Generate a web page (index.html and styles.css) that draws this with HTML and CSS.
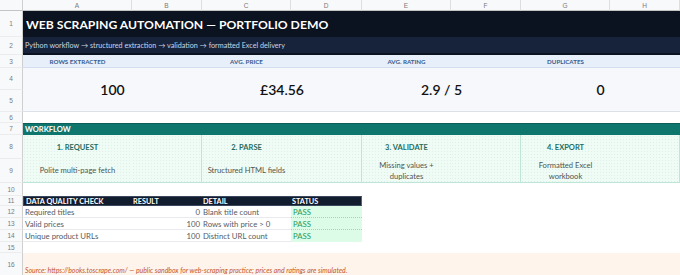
FILE: index.html
```html
<!DOCTYPE html>
<html lang="en">
<head>
<meta charset="utf-8">
<title>Web Scraping Automation — Portfolio Demo</title>
<link rel="stylesheet" href="styles.css">
</head>
<body>
<div class="sheet">
  <div class="cell corner"></div>
  <div class="cell colhead">A</div>
  <div class="cell colhead">B</div>
  <div class="cell colhead">C</div>
  <div class="cell colhead">D</div>
  <div class="cell colhead">E</div>
  <div class="cell colhead">F</div>
  <div class="cell colhead">G</div>
  <div class="cell colhead">H</div>

  <div class="cell rowhead">1</div>
  <div class="cell title span8">WEB SCRAPING AUTOMATION — PORTFOLIO DEMO</div>

  <div class="cell rowhead">2</div>
  <div class="cell subtitle span8">Python workflow → structured extraction → validation → formatted Excel delivery</div>

  <div class="cell rowhead">3</div>
  <div class="cell kpi-label">ROWS EXTRACTED</div>
  <div class="cell kpi-label"></div>
  <div class="cell kpi-label">AVG. PRICE</div>
  <div class="cell kpi-label"></div>
  <div class="cell kpi-label">AVG. RATING</div>
  <div class="cell kpi-label"></div>
  <div class="cell kpi-label">DUPLICATES</div>
  <div class="cell kpi-label"></div>

  <div class="cell rowhead">4</div>
  <div class="cell kpi-value">100</div>
  <div class="cell kpi-value">£34.56</div>
  <div class="cell kpi-value">2.9 / 5</div>
  <div class="cell kpi-value">0</div>
  <div class="cell rowhead">5</div>

  <div class="cell rowhead">6</div>
  <div class="cell blank span8"></div>

  <div class="cell rowhead">7</div>
  <div class="cell band span8">WORKFLOW</div>

  <div class="cell rowhead">8</div>
  <div class="cell wf wf-head">1. REQUEST</div>
  <div class="cell wf wf-end"></div>
  <div class="cell wf wf-head">2. PARSE</div>
  <div class="cell wf wf-end"></div>
  <div class="cell wf wf-head">3. VALIDATE</div>
  <div class="cell wf wf-end"></div>
  <div class="cell wf wf-head">4. EXPORT</div>
  <div class="cell wf wf-end"></div>

  <div class="cell rowhead">9</div>
  <div class="cell wf wf-desc wf-last">Polite multi-page fetch</div>
  <div class="cell wf wf-end wf-last"></div>
  <div class="cell wf wf-desc wf-last">Structured HTML fields</div>
  <div class="cell wf wf-end wf-last"></div>
  <div class="cell wf wf-desc wf-narrow wf-last">Missing values + duplicates</div>
  <div class="cell wf wf-end wf-last"></div>
  <div class="cell wf wf-desc wf-narrow wf-last">Formatted Excel workbook</div>
  <div class="cell wf wf-end wf-last"></div>

  <div class="cell rowhead">10</div>
  <div class="cell blank span8"></div>

  <div class="cell rowhead">11</div>
  <div class="cell th th-first">DATA QUALITY CHECK</div>
  <div class="cell th">RESULT</div>
  <div class="cell th">DETAIL</div>
  <div class="cell th th-last">STATUS</div>
  <div class="cell blank span4"></div>

  <div class="cell rowhead">12</div>
  <div class="cell q q-name">Required titles</div>
  <div class="cell q q-num">0</div>
  <div class="cell q q-detail">Blank title count</div>
  <div class="cell q-pass">PASS</div>
  <div class="cell blank span4"></div>

  <div class="cell rowhead">13</div>
  <div class="cell q q-name">Valid prices</div>
  <div class="cell q q-num">100</div>
  <div class="cell q q-detail">Rows with price &gt; 0</div>
  <div class="cell q-pass">PASS</div>
  <div class="cell blank span4"></div>

  <div class="cell rowhead">14</div>
  <div class="cell q q-name">Unique product URLs</div>
  <div class="cell q q-num">100</div>
  <div class="cell q q-detail">Distinct URL count</div>
  <div class="cell q-pass q-pass-last">PASS</div>
  <div class="cell blank span4"></div>

  <div class="cell rowhead">15</div>
  <div class="cell blank span8"></div>

  <div class="cell rowhead">16</div>
  <div class="cell source span8">Source: https://books.toscrape.com/ — public sandbox for web-scraping practice; prices and ratings are simulated.</div>
</div>
</body>
</html>
```

FILE: styles.css
```css
* {
  box-sizing: border-box;
  margin: 0;
  padding: 0;
}

html,
body {
  width: 680px;
  height: 275px;
  overflow: hidden;
  background: #ffffff;
}

body {
  font-family: Lato, "Liberation Sans", sans-serif;
  color: #222;
}

.sheet {
  display: grid;
  grid-template-columns: 23px 109px 70px 89px 71px 89px 70px 89px 70px;
  grid-template-rows: 11px 26px 18px 13px 22px 22px 11px 12px 24px 24px 13px 10px 12px 12px 12px 11px 23px;
}

.cell {
  display: flex;
  align-items: center;
  min-width: 0;
  overflow: hidden;
  white-space: nowrap;
}

.span8 { grid-column: span 8; }
.span4 { grid-column: span 4; }

.corner {
  background: #f8f9fa;
  border-right: 1px solid #cfcfcf;
  border-bottom: 1px solid #c4c4c4;
}

.colhead {
  background: #f8f9fa;
  border-right: 1px solid #dedede;
  border-bottom: 1px solid #c4c4c4;
  justify-content: center;
  font-family: "Liberation Sans", Arial, sans-serif;
  font-size: 6.5px;
  color: #7a7a7a;
}

.rowhead {
  background: #f8f9fa;
  border-right: 1px solid #cfcfcf;
  border-bottom: 1px solid #ececec;
  justify-content: center;
  font-family: "Liberation Sans", Arial, sans-serif;
  font-size: 6.5px;
  color: #7a7a7a;
}

.title {
  background: #0b1220;
  color: #ffffff;
  font-weight: 700;
  font-size: 12.2px;
  padding-left: 3px;
  padding-top: 1px;
  text-shadow: 0 0 1px rgba(0, 0, 0, 0.6);
}

.subtitle {
  background: #16233a;
  color: #cbd5e4;
  font-size: 7.2px;
  padding-left: 2px;
  border-bottom: 2px solid #0b1220;
}

.kpi-label {
  background: #e7effb;
  color: #3a5b8b;
  font-weight: 700;
  font-size: 6.2px;
  justify-content: center;
  border-bottom: 1px solid #d3def0;
}

.kpi-value {
  grid-column: span 2;
  grid-row: span 2;
  background: #f6f8fc;
  justify-content: center;
  font-size: 14px;
  font-weight: 600;
  color: #111111;
  border-bottom: 1px solid #dde2ea;
}

.band {
  background: #0f766e;
  color: #ffffff;
  font-weight: 700;
  font-size: 7.5px;
  padding-left: 2px;
  border-top: 1px solid #0b5f58;
}

.wf {
  background-color: #effcf6;
  background-image: radial-gradient(circle, #dfefe8 0.45px, transparent 0.7px);
  background-size: 3px 3px;
}

.wf-head {
  justify-content: center;
  color: #1f6d60;
  font-weight: 700;
  font-size: 7.5px;
}

.wf-desc {
  justify-content: center;
  text-align: center;
  white-space: normal;
  color: #4d5654;
  font-size: 7.6px;
  line-height: 11px;
  padding: 0 1px;
}

.wf-narrow {
  padding: 0 6px;
}

.wf-end {
  border-right: 1px solid #bde5d8;
}

.wf-last {
  border-bottom: 1px solid #bde5d8;
}

.th {
  background: #111c2e;
  color: #ffffff;
  font-weight: 700;
  font-size: 7.3px;
  padding-left: 1px;
  border-top: 1px solid #3b475c;
  border-bottom: 1px solid #3b475c;
}

.th-first {
  padding-left: 2px;
  border-left: 1px solid #3b475c;
}

.th-last {
  border-right: 1px solid #56627a;
}

.q {
  color: #555b63;
  font-size: 7.8px;
  border-bottom: 1px solid #e8eaee;
}

.q-name {
  padding-left: 2px;
}

.q-num {
  justify-content: flex-end;
  padding-right: 2px;
}

.q-detail {
  padding-left: 1px;
}

.q-pass {
  background: #dcfce7;
  color: #2a9a5a;
  font-size: 7.8px;
  padding-left: 2px;
  border-bottom: 1px dotted #b4c6dd;
}

.q-pass-last {
  border-bottom: none;
}

.source {
  background: #fff4ec;
  color: #c2552b;
  font-style: italic;
  font-size: 6.9px;
  align-items: flex-end;
  padding: 0 0 2px 2px;
}
```
